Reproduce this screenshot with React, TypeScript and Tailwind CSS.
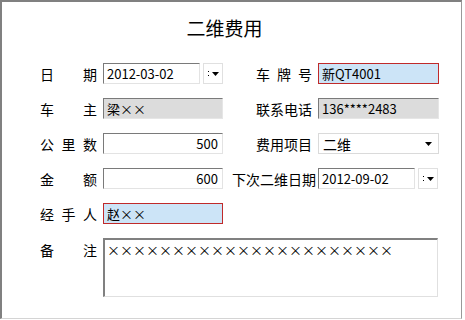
import React from 'react';

const CJK = { fontFamily: '"Noto Sans CJK SC", "Liberation Sans", sans-serif' };

function Label({ text, width = 'w-[57px]', spread = true }: { text: string; width?: string; spread?: boolean }) {
  const chars = text.split('');
  return (
    <div className={`${width} shrink-0 flex ${spread ? 'justify-between' : 'justify-end'} text-[14px] text-black leading-none`}>
      {spread ? chars.map((c, i) => <span key={i}>{c}</span>) : <span>{text}</span>}
    </div>
  );
}

function Field({
  value,
  variant = 'plain',
  align = 'left',
  width = 'w-[120px]',
}: {
  value: string;
  variant?: 'plain' | 'gray' | 'focus';
  align?: 'left' | 'right';
  width?: string;
}) {
  const look =
    variant === 'focus'
      ? 'border border-[#c02a2a] bg-[#cce4f7]'
      : variant === 'gray'
      ? 'border-t border-l border-t-[#7a7a7a] border-l-[#7a7a7a] border-r border-b border-r-[#e6e6e6] border-b-[#e6e6e6] bg-[#dcdcdc]'
      : 'border-t border-l border-t-[#7a7a7a] border-l-[#7a7a7a] border-r border-b border-r-[#e3e3e3] border-b-[#e3e3e3] bg-white';
  return (
    <div
      className={`${width} h-[21px] shrink-0 flex items-center px-[3px] text-[13px] text-black ${look} ${
        align === 'right' ? 'justify-end pr-[4px]' : ''
      }`}
    >
      <span className="leading-none">{value}</span>
    </div>
  );
}

function DateField({ value }: { value: string }) {
  return (
    <div className="flex items-center gap-[3px] shrink-0">
      <Field value={value} width="w-[97px]" />
      <div className="w-[20px] h-[21px] border border-[#e0e0e0] bg-white flex items-center justify-center gap-[3px]">
        <span className="flex flex-col gap-[3px]">
          <span className="w-px h-px bg-black" />
          <span className="w-px h-px bg-black" />
        </span>
        <svg width="7" height="4" viewBox="0 0 7 4">
          <path d="M0 0 H7 L3.5 4 Z" fill="#000" />
        </svg>
      </div>
    </div>
  );
}

function SelectField({ value }: { value: string }) {
  return (
    <div className="w-[121px] h-[21px] shrink-0 border border-[#dadada] bg-white flex items-center justify-between pl-[4px] pr-[6px] text-[14px] text-black">
      <span className="leading-none">{value}</span>
      <svg width="7" height="4" viewBox="0 0 7 4">
        <path d="M0 0 H7 L3.5 4 Z" fill="#000" />
      </svg>
    </div>
  );
}

function Row({ children }: { children: React.ReactNode }) {
  return <div className="flex items-center h-[21px]">{children}</div>;
}

export default function App() {
  return (
    <div className="w-[462px] h-[319px] bg-white border-t-2 border-l-2 border-t-[#808080] border-l-[#808080] border-r border-r-[#999999] border-b border-b-[#d4d4d4]" style={CJK}>
      <div className="flex justify-center pt-[15px] pr-[14px] text-[19px] leading-[22px] text-black">二维费用</div>

      <div className="flex flex-col gap-[14px] pl-[38px] pt-[24px]">
        <Row>
          <Label text="日期" />
          <div className="ml-[6px]"><DateField value="2012-03-02" /></div>
          <div className="ml-[11px] flex items-center">
            <div className="w-[82px] flex justify-end pr-[4px]"><Label text="车牌号" width="w-[56px]" /></div>
            <div className="ml-[2px]"><Field value="新QT4001" variant="focus" width="w-[121px]" /></div>
          </div>
        </Row>

        <Row>
          <Label text="车主" />
          <div className="ml-[6px]"><Field value="梁××" variant="gray" /></div>
          <div className="ml-[11px] flex items-center">
            <div className="w-[82px] flex justify-end pr-[4px]"><Label text="联系电话" width="w-[56px]" /></div>
            <div className="ml-[2px]"><Field value="136****2483" variant="gray" width="w-[121px]" /></div>
          </div>
        </Row>

        <Row>
          <Label text="公里数" />
          <div className="ml-[6px]"><Field value="500" align="right" /></div>
          <div className="ml-[11px] flex items-center">
            <div className="w-[82px] flex justify-end pr-[4px]"><Label text="费用项目" width="w-[56px]" /></div>
            <div className="ml-[2px]"><SelectField value="二维" /></div>
          </div>
        </Row>

        <Row>
          <Label text="金额" />
          <div className="ml-[6px]"><Field value="600" align="right" /></div>
          <div className="ml-[11px] flex items-center">
            <div className="w-[82px] flex justify-end"><Label text="下次二维日期" width="w-[84px]" spread={false} /></div>
            <div className="ml-[2px]"><DateField value="2012-09-02" /></div>
          </div>
        </Row>

        <Row>
          <Label text="经手人" />
          <div className="ml-[6px]"><Field value="赵××" variant="focus" /></div>
        </Row>

        <div className="flex items-start">
          <div className="pt-[5px]"><Label text="备注" /></div>
          <div className="ml-[6px] w-[335px] h-[59px] border-t-2 border-l-2 border-t-[#808080] border-l-[#808080] border-r border-b border-r-[#e0e0e0] border-b-[#e0e0e0] bg-white px-[2px] pt-[2px] text-[13px] leading-[15px] text-black">
            ××××××××××××××××××××××
          </div>
        </div>
      </div>
    </div>
  );
}
